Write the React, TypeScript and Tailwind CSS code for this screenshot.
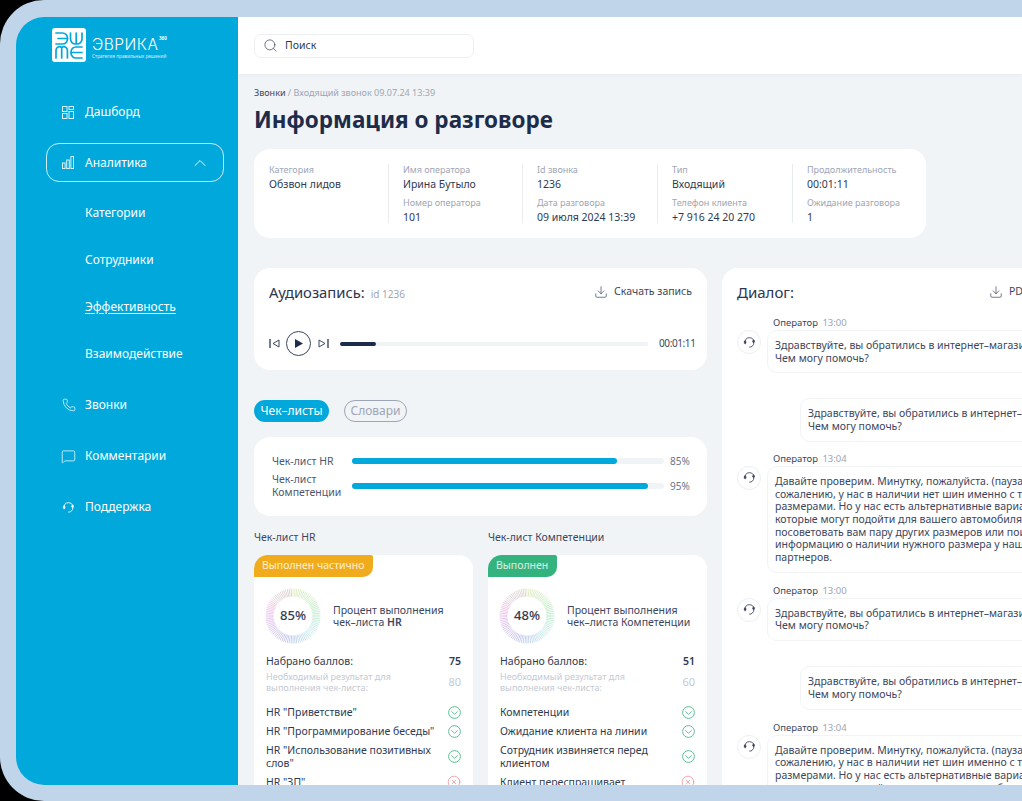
import { ChevronUp, CircleX, Download, MessageSquare, Phone, Search } from 'lucide-react'
import type { ReactNode } from 'react'

type NavItem = { label: string; icon: 'phone' | 'comment' | 'support' }

const SUB_ITEMS = ['Категории', 'Сотрудники', 'Эффективность', 'Взаимодействие']

const BOTTOM_ITEMS: NavItem[] = [
  { label: 'Звонки', icon: 'phone' },
  { label: 'Комментарии', icon: 'comment' },
  { label: 'Поддержка', icon: 'support' },
]

const INFO_COLUMNS = [
  { width: 'w-[119px]', rows: [['Категория', 'Обзвон лидов']] },
  { width: 'w-[134px]', rows: [['Имя оператора', 'Ирина Бутыло'], ['Номер оператора', '101']] },
  { width: 'w-[135px]', rows: [['Id звонка', '1236'], ['Дата разговора', '09 июля 2024 13:39']] },
  { width: 'w-[135px]', rows: [['Тип', 'Входящий'], ['Телефон клиента', '+7 916 24 20 270']] },
  { width: 'w-[134px]', rows: [['Продолжительность', '00:01:11'], ['Ожидание разговора', '1']] },
]

const HELLO = ['Здравствуйте, вы обратились в интернет–магазин шин.', 'Чем могу помочь?']
const CHECK_TEXT = [
  'Давайте проверим. Минутку, пожалуйста. (пауза) К',
  'сожалению, у нас в наличии нет шин именно с такими',
  'размерами. Но у нас есть альтернативные варианты,',
  'которые могут подойти для вашего автомобиля. Могу',
  'посоветовать вам пару других размеров или поискать',
  'информацию о наличии нужного размера у наших',
  'партнеров.',
]

function HeadsetIcon({ className }: { className: string }) {
  return (
    <svg viewBox="0 0 16 16" fill="none" stroke="currentColor" strokeWidth="1.1" strokeLinecap="round" className={className}>
      <path d="M2.6 9.6A5.6 5.6 0 0 1 3.4 4.2 5.7 5.7 0 0 1 12.7 4.4" />
      <path d="M13.4 7.6a5.6 5.6 0 0 1-2.2 5.2 5.6 5.6 0 0 1-3 .9" />
      <rect x="12" y="5.2" width="2" height="2.6" rx="0.8" fill="currentColor" />
      <rect x="1.6" y="6.4" width="2" height="2.6" rx="0.8" fill="currentColor" />
    </svg>
  )
}

function Logo() {
  return (
    <div className="flex items-start gap-[6px]">
      <svg viewBox="0 0 34 34" className="h-[34px] w-[34px]">
        <rect width="34" height="34" rx="3" fill="#ffffff" />
        <g fill="none" stroke="#00a8db" strokeWidth="1.7" strokeLinecap="round">
          <path d="M4 5h6.5a5 5 0 0 1 5 5v1a5 5 0 0 1-5 5H4M6 10.5h9" />
          <path d="M18.5 5v6a5 5 0 0 0 5 5H25a5 5 0 0 0 5-5V5M24.2 5v10" />
          <path d="M4 30V22a3.5 3.5 0 0 1 5.7-2.5 3.5 3.5 0 0 1 5.7 2.5v8M9.7 20v10" />
          <path d="M30 19h-6a5 5 0 0 0-5 5v1a5 5 0 0 0 5 5h6M20 24.5h10" />
        </g>
      </svg>
      <div className="relative mt-[9px] w-[76px]">
        <div className="text-[15.5px] leading-[16px] tracking-[0.5px] text-white font-['Inter',sans-serif] font-light whitespace-nowrap">ЭВРИКА</div>
        <div className="absolute left-[67px] top-[-2px] text-[4.5px] leading-[6px] font-bold text-white">360</div>
        <div className="text-[4.7px] leading-[6px] text-white/80 whitespace-nowrap">Стратегия правильных решений</div>
      </div>
    </div>
  )
}

function Sidebar() {
  return (
    <aside className="w-[222px] shrink-0 bg-[#00a8db] text-white">
      <div className="pl-[36px] pt-[11px]">
        <Logo />
      </div>
      <div className="mt-[40px] flex h-[20px] items-center pl-[46px] text-[12px]">
        <svg viewBox="0 0 12 13" fill="none" stroke="currentColor" strokeOpacity="0.85" strokeWidth="1" className="mr-[11px] h-[13px] w-[12px]">
          <rect x="0.5" y="0.5" width="4.5" height="5" />
          <rect x="7" y="0.5" width="4.5" height="3" />
          <rect x="7" y="5.5" width="4.5" height="7" />
          <rect x="0.5" y="7.5" width="4.5" height="5" />
        </svg>
        <span>Дашборд</span>
      </div>
      <div className="mx-[30px] mt-[21px] flex h-[39px] w-[178px] items-center rounded-[13px] border border-white/80 pl-[15px] pr-[13px] text-[12px]">
        <svg viewBox="0 0 12 13" fill="none" stroke="currentColor" strokeOpacity="0.85" strokeWidth="1" className="mr-[11px] h-[13px] w-[12px]">
          <rect x="0.5" y="7" width="2.6" height="5.5" />
          <rect x="4.7" y="4" width="2.6" height="8.5" />
          <rect x="8.9" y="0.5" width="2.6" height="12" />
        </svg>
        <span>Аналитика</span>
        <ChevronUp size={20} strokeWidth={1.1} className="ml-auto" />
      </div>
      <div className="mt-[21px] flex flex-col gap-[27px] pl-[69px] text-[12px] leading-[20px]">
        {SUB_ITEMS.map((item) => (
          <div key={item} className={item === 'Эффективность' ? 'underline underline-offset-2' : ''}>
            {item}
          </div>
        ))}
      </div>
      <div className="mt-[31px] flex flex-col gap-[31px] pl-[46px] text-[12px] leading-[20px]">
        {BOTTOM_ITEMS.map((item) => (
          <div key={item.label} className="flex items-center">
            <span className="flex w-[23px] shrink-0">
              {item.icon === 'phone' && <Phone size={14} strokeWidth={1.2} />}
              {item.icon === 'comment' && <MessageSquare size={15} strokeWidth={1.2} className="-ml-[1px]" />}
              {item.icon === 'support' && <HeadsetIcon className="h-[13px] w-[13px]" />}
            </span>
            <span>{item.label}</span>
          </div>
        ))}
      </div>
    </aside>
  )
}

function InfoCard() {
  return (
    <div className="mt-[14px] flex w-[672px] rounded-[16px] bg-white py-[15px] pl-[15px]">
      {INFO_COLUMNS.map((column, i) => (
        <div
          key={column.rows[0][0]}
          className={`${column.width} h-[59px] shrink-0 ${i > 0 ? 'border-l border-[#e8ecef] pl-[14px]' : ''}`}
        >
          {column.rows.map(([label, value]) => (
            <div key={label} className="mb-[6px] whitespace-nowrap">
              <div className="text-[9px] leading-[12px] text-[#9ea5b4]">{label}</div>
              <div className="mt-[1px] text-[10.5px] leading-[14px] text-[#2f3a52]">{value}</div>
            </div>
          ))}
        </div>
      ))}
    </div>
  )
}

function AudioCard() {
  return (
    <div className="h-[102px] rounded-[16px] bg-white px-[15px] pt-[13px]">
      <div className="flex items-center justify-between">
        <div className="flex items-baseline gap-[6px]">
          <span className="text-[14.8px] leading-[22px] text-[#2b3650]">Аудиозапись:</span>
          <span className="text-[10px] text-[#9ea5b4]">id 1236</span>
        </div>
        <div className="flex items-center gap-[6px] text-[10.5px] text-[#3c465d]">
          <Download size={14} strokeWidth={1.2} />
          <span>Скачать запись</span>
        </div>
      </div>
      <div className="mt-[28px] flex items-center">
        <svg viewBox="0 0 11 9" fill="none" stroke="#3c465d" strokeWidth="1" className="h-[9px] w-[11px] shrink-0">
          <path d="M1 0v9" strokeWidth="1.4" />
          <path d="M10 1L4 4.5 10 8z" />
        </svg>
        <div className="ml-[6px] flex h-[25px] w-[25px] shrink-0 items-center justify-center rounded-full border border-[#3c465d]">
          <svg viewBox="0 0 8 9" className="ml-[1px] h-[9px] w-[8px]" fill="#1e2c4c">
            <path d="M0 0l8 4.5L0 9z" />
          </svg>
        </div>
        <svg viewBox="0 0 11 9" fill="none" stroke="#3c465d" strokeWidth="1" className="ml-[7px] h-[9px] w-[11px] shrink-0">
          <path d="M10 0v9" strokeWidth="1.4" />
          <path d="M1 1l6 3.5L1 8z" />
        </svg>
        <div className="ml-[11px] h-[4px] w-[308px] shrink-0 rounded-full bg-[#f1f4f6]">
          <div className="h-full w-[36px] rounded-full bg-[#1e2c4c]" />
        </div>
        <span className="ml-[11px] whitespace-nowrap text-[10px] tracking-[-0.4px] text-[#3c465d]">00:01:11</span>
      </div>
    </div>
  )
}

function Bar({ label, percent }: { label: string[]; percent: number }) {
  return (
    <div className="flex items-center">
      <div className="w-[80px] shrink-0 text-[10.5px] leading-[13px] text-[#4d5770]">
        {label.map((line) => (
          <div key={line}>{line}</div>
        ))}
      </div>
      <div className="h-[6px] w-[312px] rounded-full bg-[#f1f4f6]">
        <div className="h-full rounded-full bg-[#00a8db]" style={{ width: `${percent}%` }} />
      </div>
      <span className="ml-[6px] text-[10px] text-[#6d7589]">{percent}%</span>
    </div>
  )
}

function Ring({ value }: { value: number }) {
  const ticks = Array.from({ length: 90 }, (_, i) => i)
  return (
    <div className="relative -ml-[1px] h-[56px] w-[56px] shrink-0">
      <svg viewBox="0 0 56 56" className="h-[56px] w-[56px]">
        {ticks.map((i) => {
          const turn = i / 90
          const angle = turn * Math.PI * 2
          const hue = (70 + turn * 300) % 360
          const sin = Math.sin(angle)
          const cos = Math.cos(angle)
          // the top-left stretch of the ring fades to grey
          const saturation = turn > 0.85 ? 12 : 50
          return (
            <line
              key={i}
              x1={28 + sin * 19.5}
              y1={28 - cos * 19.5}
              x2={28 + sin * 27.5}
              y2={28 - cos * 27.5}
              stroke={`hsl(${hue} ${saturation}% 80%)`}
              strokeWidth="0.7"
            />
          )
        })}
      </svg>
      <div className="absolute inset-0 flex items-center justify-center text-[13px] font-medium text-[#2f3a52]">{value}%</div>
    </div>
  )
}

function CheckMark() {
  return (
    <svg viewBox="0 0 13 13" fill="none" stroke="#4cb98a" strokeWidth="0.9" className="h-[13px] w-[13px] shrink-0">
      <circle cx="6.5" cy="6.5" r="5.9" />
      <path d="M3.7 5.6L6.5 8.4l2.8-2.8" strokeLinecap="round" strokeLinejoin="round" />
    </svg>
  )
}

type Checklist = {
  title: string
  badge: string
  badgeClass: string
  percent: number
  caption: ReactNode
  score: number
  need: number
  items: { text: string[]; ok: boolean }[]
}

const CHECKLISTS: Checklist[] = [
  {
    title: 'Чек-лист HR',
    badge: 'Выполнен частично',
    badgeClass: 'bg-[#f0ac1c] w-[119px]',
    percent: 85,
    caption: (
      <>
        чек–листа <span className="font-semibold">HR</span>
      </>
    ),
    score: 75,
    need: 80,
    items: [
      { text: ['HR "Приветствие"'], ok: true },
      { text: ['HR "Программирование беседы"'], ok: true },
      { text: ['HR "Использование позитивных', 'слов"'], ok: true },
      { text: ['HR "ЗП"'], ok: false },
    ],
  },
  {
    title: 'Чек-лист Компетенции',
    badge: 'Выполнен',
    badgeClass: 'bg-[#35b37e] w-[69px]',
    percent: 48,
    caption: 'чек–листа Компетенции',
    score: 51,
    need: 60,
    items: [
      { text: ['Компетенции'], ok: true },
      { text: ['Ожидание клиента на линии'], ok: true },
      { text: ['Сотрудник извиняется перед', 'клиентом'], ok: true },
      { text: ['Клиент переспрашивает'], ok: false },
    ],
  },
]

function ChecklistCard({ list }: { list: Checklist }) {
  return (
    <div className="w-[219px] shrink-0">
      <div className="text-[10.5px] leading-[14px] text-[#3c465d]">{list.title}</div>
      <div className="mt-[11px] h-[300px] rounded-[14px] bg-white">
        <div className={`${list.badgeClass} h-[22px] rounded-br-[10px] rounded-tl-[14px] rounded-tr-[2px] pl-[8px] text-[10.5px] leading-[21px] whitespace-nowrap text-white/80`}>
          {list.badge}
        </div>
        <div className="px-[12px]">
          <div className="mt-[11px] flex items-center gap-[12px]">
            <Ring value={list.percent} />
            <div className="text-[10.5px] leading-[12.5px] text-[#3c465d] whitespace-nowrap">
              <div>Процент выполнения</div>
              <div>{list.caption}</div>
            </div>
          </div>
          <div className="mt-[10px] flex items-center justify-between text-[10.5px] leading-[14px] text-[#2f3a52]">
            <span>Набрано баллов:</span>
            <span className="font-semibold">{list.score}</span>
          </div>
          <div className="mt-[3px] flex items-center justify-between text-[#c4cad3]">
            <div className="text-[9px] leading-[11px]">
              <div>Необходимый результат для</div>
              <div>выполнения чек-листа:</div>
            </div>
            <span className="text-[11px]">{list.need}</span>
          </div>
          <div className="mt-[13px] flex flex-col gap-[6px]">
            {list.items.map((item) => (
              <div key={item.text[0]} className="flex items-center justify-between text-[10.5px] leading-[12.5px] text-[#2f3a52]">
                <div className="whitespace-nowrap">
                  {item.text.map((line) => (
                    <div key={line}>{line}</div>
                  ))}
                </div>
                {item.ok ? <CheckMark /> : <CircleX size={14} strokeWidth={0.9} className="shrink-0 text-[#e8606a]" />}
              </div>
            ))}
          </div>
        </div>
      </div>
    </div>
  )
}

function Bubble({ lines, who, time }: { lines: string[]; who?: boolean; time?: string }) {
  if (!who) {
    return (
      <div className="ml-[78px] w-[320px] rounded-[10px] border border-[#f1f3f5] px-[7px] py-[8px] text-[10.5px] leading-[12.7px] whitespace-nowrap text-[#3c465d]">
        {lines.map((line) => (
          <div key={line}>{line}</div>
        ))}
      </div>
    )
  }
  return (
    <div className="flex">
      <div className="ml-[15px] mt-[14px] flex h-[24px] w-[24px] shrink-0 items-center justify-center rounded-full border border-[#eceff2] text-[#3c465d]">
        <HeadsetIcon className="h-[13px] w-[13px]" />
      </div>
      <div className="ml-[6px]">
        <div className="ml-[6px] text-[9.5px] leading-[13px] text-[#3c465d]">
          Оператор <span className="ml-[2px] text-[#9ea5b4]">{time}</span>
        </div>
        <div className="mt-[1px] w-[340px] rounded-[10px] border border-[#f1f3f5] px-[7px] py-[8px] text-[10.5px] leading-[12.7px] whitespace-nowrap text-[#3c465d]">
          {lines.map((line) => (
            <div key={line}>{line}</div>
          ))}
        </div>
      </div>
    </div>
  )
}

function Dialog() {
  return (
    <div className="ml-[15px] h-[560px] w-[340px] shrink-0 rounded-l-[16px] bg-white">
      <div className="flex w-[303px] items-center justify-between pl-[15px] pt-[13px]">
        <span className="text-[15px] leading-[22px] text-[#2b3650]">Диалог:</span>
        <div className="flex items-center gap-[6px] text-[10.5px] text-[#3c465d]">
          <Download size={14} strokeWidth={1.2} />
          <span className="w-[16px] overflow-hidden">PDF</span>
        </div>
      </div>
      <div className="mt-[13px]">
        <Bubble who time="13:00" lines={HELLO} />
        <div className="mt-[25px]">
          <Bubble lines={HELLO} />
        </div>
        <div className="mt-[10px]">
          <Bubble who time="13:04" lines={CHECK_TEXT} />
        </div>
        <div className="mt-[11px]">
          <Bubble who time="13:00" lines={HELLO} />
        </div>
        <div className="mt-[25px]">
          <Bubble lines={HELLO} />
        </div>
        <div className="mt-[11px]">
          <Bubble who time="13:04" lines={CHECK_TEXT} />
        </div>
      </div>
    </div>
  )
}

export default function App() {
  return (
    <div className="h-[801px] w-[1022px] overflow-hidden bg-black font-['Noto_Sans',sans-serif]">
      <div className="h-[801px] w-[1022px] rounded-l-[44px] bg-[#c0d5e9] pb-[16px] pl-[16px] pt-[17px]">
        <div className="flex h-[768px] overflow-hidden rounded-l-[28px] bg-[#f1f4f6]">
          <Sidebar />
          <main className="min-w-0 flex-1 overflow-hidden">
            <div className="flex h-[57px] items-center bg-white pl-[16px] shadow-[0_1px_4px_rgba(0,0,0,0.04)]">
              <div className="flex h-[24px] w-[220px] items-center rounded-[7px] border border-[#eceff2] pl-[8px] text-[10.5px] text-[#2f3a52]">
                <Search size={15} strokeWidth={1.1} className="mr-[7px]" />
                Поиск
              </div>
            </div>
            <div className="pl-[16px] pt-[12px]">
              <div className="text-[9px] leading-[13px] text-[#9ea5b4]">
                <span className="text-[#3c465d]">Звонки</span> / Входящий звонок 09.07.24 13:39
              </div>
              <h1 className="mt-[6px] text-[22.5px] leading-[30px] font-bold text-[#1e2c4c] whitespace-nowrap">Информация о разговоре</h1>
              <InfoCard />
              <div className="mt-[30px] flex">
                <div className="w-[453px] shrink-0">
                  <AudioCard />
                  <div className="mt-[30px] flex gap-[15px]">
                    <div className="flex h-[22px] w-[75px] items-center justify-center rounded-full bg-[#00a8db] text-[12px] text-white">Чек–листы</div>
                    <div className="flex h-[22px] w-[63px] items-center justify-center rounded-full border border-[#9ea5b4] text-[12px] text-[#9ea5b4]">Словари</div>
                  </div>
                  <div className="mt-[15px] flex h-[79px] flex-col justify-center gap-[4.5px] rounded-[16px] bg-white pl-[18px]">
                    <Bar label={['Чек-лист HR']} percent={85} />
                    <Bar label={['Чек-лист', 'Компетенции']} percent={95} />
                  </div>
                  <div className="mt-[14px] flex gap-[15px]">
                    {CHECKLISTS.map((list) => (
                      <ChecklistCard key={list.title} list={list} />
                    ))}
                  </div>
                </div>
                <Dialog />
              </div>
            </div>
          </main>
        </div>
      </div>
    </div>
  )
}
